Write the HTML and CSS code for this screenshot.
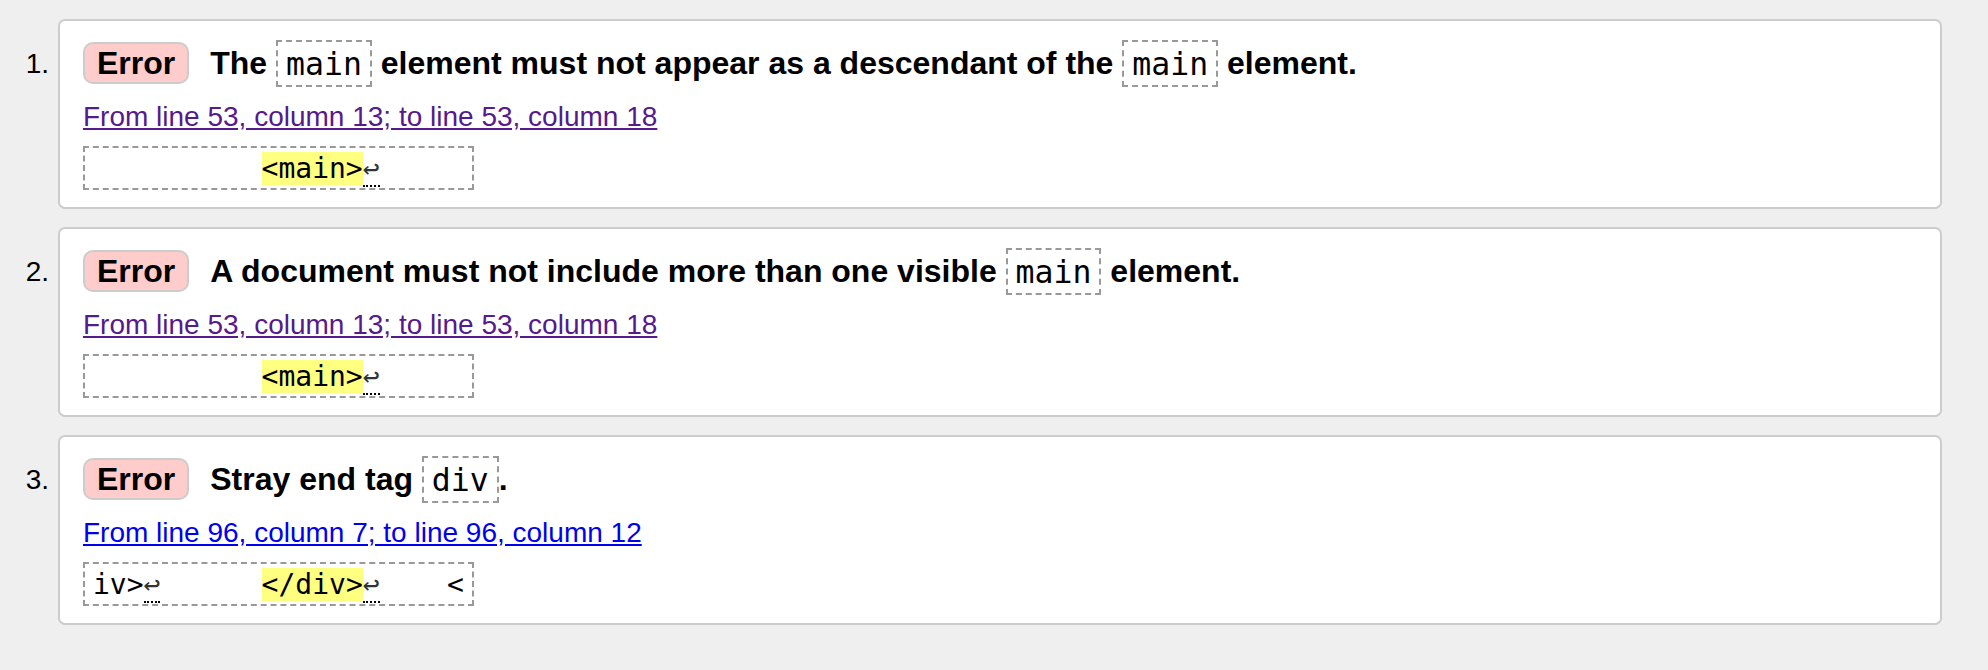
FILE: index.html
```html
<!DOCTYPE html>
<html lang="en">
<head>
<meta charset="utf-8">
<title>Validation messages</title>
<link rel="stylesheet" href="styles.css">
</head>
<body>
<ol class="messages">
  <li class="item">
    <span class="num">1.</span>
    <div class="card">
      <p class="msg"><strong class="badge">Error</strong><span class="text">The <code>main</code> element must not appear as a descendant of the <code>main</code> element.</span></p>
      <p class="loc"><a class="visited" href="#l53c13">From line 53, column 13; to line 53, column 18</a></p>
      <div class="extract"><code>          <mark>&lt;main&gt;</mark><b class="lf">↩</b>     </code></div>
    </div>
  </li>
  <li class="item">
    <span class="num">2.</span>
    <div class="card">
      <p class="msg"><strong class="badge">Error</strong><span class="text">A document must not include more than one visible <code>main</code> element.</span></p>
      <p class="loc"><a class="visited" href="#l53c13b">From line 53, column 13; to line 53, column 18</a></p>
      <div class="extract"><code>          <mark>&lt;main&gt;</mark><b class="lf">↩</b>     </code></div>
    </div>
  </li>
  <li class="item">
    <span class="num">3.</span>
    <div class="card">
      <p class="msg"><strong class="badge">Error</strong><span class="text">Stray end tag <code>div</code>.</span></p>
      <p class="loc"><a href="#l96c7">From line 96, column 7; to line 96, column 12</a></p>
      <div class="extract"><code>iv&gt;<b class="lf">↩</b>      <mark>&lt;/div&gt;</mark><b class="lf">↩</b>    &lt;</code></div>
    </div>
  </li>
</ol>
</body>
</html>
```

FILE: styles.css
```css
* {
  box-sizing: border-box;
}

html,
body {
  margin: 0;
  padding: 0;
}

body {
  background: #efefef;
  font-family: "Liberation Sans", Arial, sans-serif;
  color: #000;
}

.messages {
  list-style: none;
  margin: 0;
  padding: 19px 46px 0 0;
  display: flex;
  flex-direction: column;
  gap: 18px;
}

.item {
  display: flex;
}

.num {
  flex: 0 0 58px;
  text-align: right;
  padding-right: 9px;
  padding-top: 29px;
  font-size: 28px;
  line-height: 32px;
}

.card {
  flex: 1;
  background: #fff;
  border: 2px solid #ccc;
  border-radius: 7px;
  padding: 18px 23px 17px;
}

.msg {
  display: flex;
  align-items: center;
  gap: 21px;
  height: 48px;
  margin: 0;
  font-size: 32px;
  font-weight: bold;
}

.badge {
  background: #fcc;
  border: 2px solid #ccc;
  border-radius: 10px;
  padding: 0 12px;
  line-height: 38px;
}

.text {
  line-height: 36px;
  white-space: nowrap;
}

.text code {
  font-family: "DejaVu Sans Mono", monospace;
  font-weight: normal;
  font-size: 31.5px;
  border: 2px dashed #999;
  padding: 3.5px 8px;
}

.loc {
  margin: 14px 0 0;
  font-size: 28px;
  line-height: 32px;
}

.loc a {
  color: #0000ee;
}

.loc a.visited {
  color: #551a8b;
}

.extract {
  margin-top: 13px;
  width: fit-content;
  border: 2px dashed #999;
  padding: 4px 8px 3px;
  font-family: "DejaVu Sans Mono", monospace;
  font-size: 28px;
  line-height: 33px;
  white-space: pre;
}

.extract code {
  font-family: inherit;
  font-size: inherit;
}

.extract mark {
  background: #ffff80;
  color: #000;
}

.lf {
  font-weight: normal;
  color: #333;
  border-bottom: 2px dotted #000;
}
```
